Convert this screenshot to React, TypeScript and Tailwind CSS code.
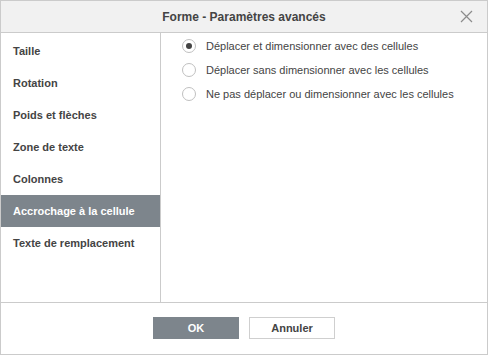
const tabs = [
  "Taille",
  "Rotation",
  "Poids et flèches",
  "Zone de texte",
  "Colonnes",
  "Accrochage à la cellule",
  "Texte de remplacement",
];

const options = [
  "Déplacer et dimensionner avec des cellules",
  "Déplacer sans dimensionner avec les cellules",
  "Ne pas déplacer ou dimensionner avec les cellules",
];

function Radio({ checked }: { checked: boolean }) {
  return (
    <span className="flex h-[14px] w-[14px] shrink-0 items-center justify-center rounded-full border border-[#c0c0c0] bg-white">
      {checked && <span className="h-[6px] w-[6px] rounded-full bg-[#444]" />}
    </span>
  );
}

export default function App() {
  const active = 5;
  return (
    <div
      className="flex h-[355px] w-[488px] flex-col border border-[#cbcbcb] bg-white text-[#444]"
      style={{ fontFamily: '"Liberation Sans", Arial, sans-serif' }}
    >
      {/* Header */}
      <div className="relative flex h-[32px] shrink-0 items-center justify-center border-b border-[#cbcbcb] bg-[#f1f1f1]">
        <span className="text-[12px] font-bold">Forme - Paramètres avancés</span>
        <svg className="absolute right-[14px] top-[9px]" width="13" height="13" viewBox="0 0 13 13">
          <path d="M1 1L12 12M12 1L1 12" stroke="#8c8c8c" strokeWidth="1.2" />
        </svg>
      </div>

      {/* Body */}
      <div className="flex h-[270px] shrink-0 border-b border-[#cbcbcb]">
        <div className="flex w-[160px] shrink-0 flex-col border-r border-[#cbcbcb] pt-[2px]">
          {tabs.map((t, i) => (
            <div
              key={t}
              className={`flex h-[32px] items-center pl-[12px] text-[11px] font-bold ${
                i === active ? "bg-[#7d858c] text-white" : ""
              }`}
            >
              {t}
            </div>
          ))}
        </div>
        <div className="flex flex-col gap-[10px] pl-[21px] pt-[6px]">
          {options.map((o, i) => (
            <div key={o} className="flex h-[14px] items-center gap-[10px] text-[11px]">
              <Radio checked={i === 0} />
              <span>{o}</span>
            </div>
          ))}
        </div>
      </div>

      {/* Footer */}
      <div className="flex flex-1 items-start justify-center gap-[10px] pt-[14px]">
        <button className="h-[22px] w-[86px] bg-[#7d858c] text-[11px] font-bold text-white">OK</button>
        <button className="h-[22px] w-[86px] border border-[#cfcfcf] bg-white text-[11px] font-bold text-[#444]">
          Annuler
        </button>
      </div>
    </div>
  );
}
